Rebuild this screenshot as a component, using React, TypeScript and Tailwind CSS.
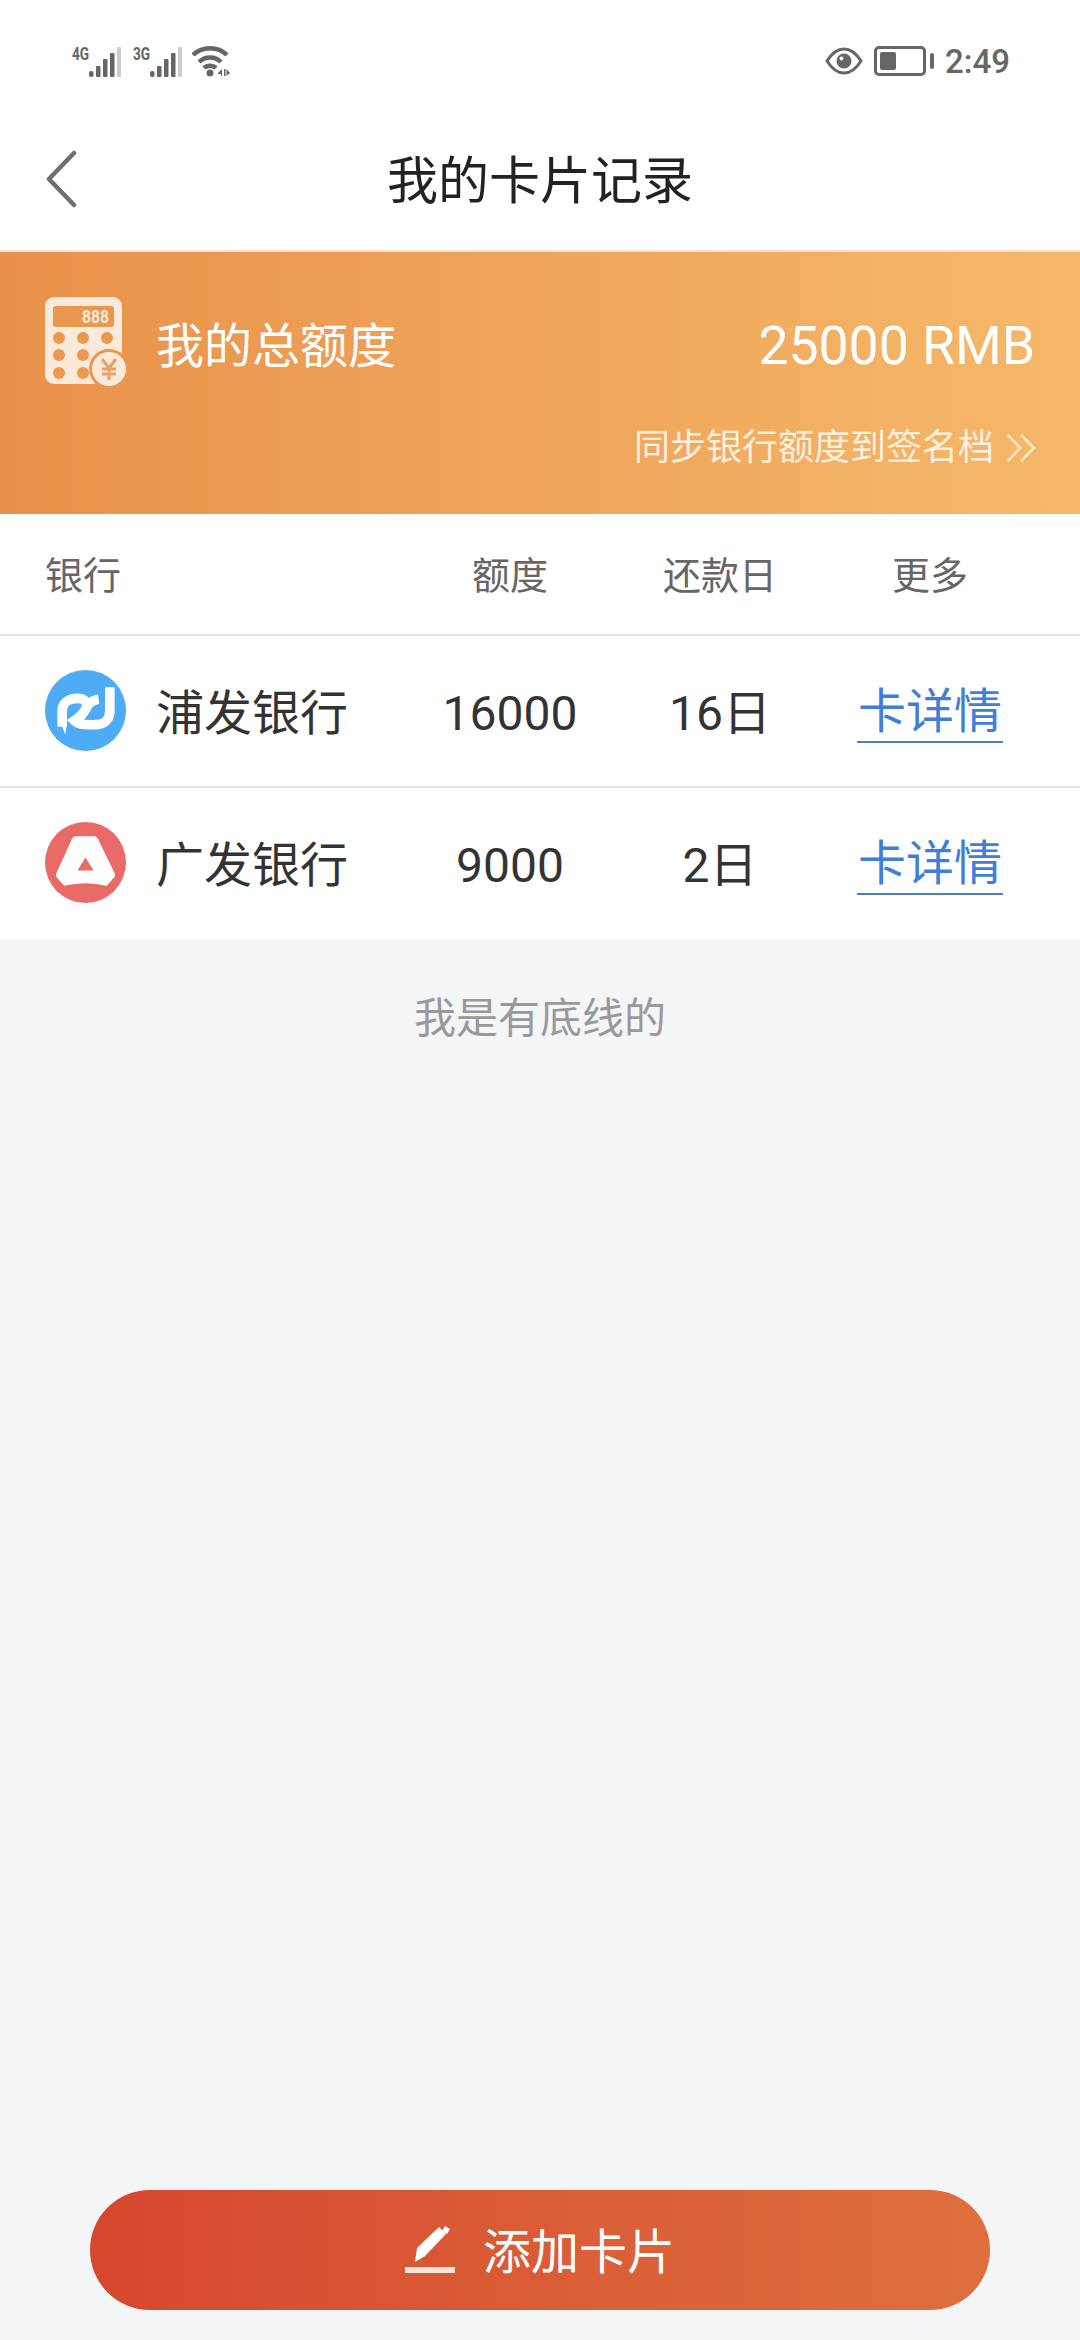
const fontStack = "font-['Roboto','Noto_Sans_CJK_SC',sans-serif]";

const cards = [
  { name: "浦发银行", limit: "16000", due: "16日", logo: "spdb" },
  { name: "广发银行", limit: "9000", due: "2日", logo: "cgb" },
];

const SignalBars = ({ label }: { label: string }) => (
  <div className="w-[49px] h-[31px] relative">
    <span className="absolute left-0 top-[-2px] text-[19px] leading-[20px] font-bold text-[#666] scale-x-[0.72] origin-left">
      {label}
    </span>
    <svg width="49" height="31" viewBox="0 0 49 31" className="absolute left-0 top-0">
      <rect x="17" y="25" width="4.5" height="6" rx="2" fill="#666" />
      <rect x="24" y="20" width="4.5" height="11" rx="1" fill="#666" />
      <rect x="31" y="13" width="4.5" height="18" rx="1" fill="#666" />
      <rect x="38" y="7" width="4.5" height="24" rx="1" fill="#666" />
      <rect x="45" y="1" width="4" height="30" rx="1" fill="#ccc" />
    </svg>
  </div>
);

const WifiIcon = () => (
  <svg width="38" height="32" viewBox="0 0 38 32" fill="none" stroke="#666" strokeWidth="4.5">
    <path d="M1 10C10 1 26 1 35 10" />
    <path d="M7 17C13 11 23 11 29 17" />
    <path d="M12 23C15 20 21 20 24 23" />
    <circle cx="18" cy="28" r="3.5" fill="#666" stroke="none" />
    <path d="M26 28l4-4v7h-1v-2h-3zM32 24h1.5v7H32zM34.5 24l3.5 4-3.5 3z" fill="#666" stroke="none" />
  </svg>
);

const EyeIcon = () => (
  <svg width="38" height="28" viewBox="0 0 38 28" fill="none">
    <path d="M2 14C7 6 12 2 19 2s12 4 17 12c-5 8-10 12-17 12S7 22 2 14Z" stroke="#666" strokeWidth="3" />
    <circle cx="19" cy="14" r="7.5" fill="#666" />
    <circle cx="16.5" cy="11.5" r="2" fill="#fff" />
  </svg>
);

const BatteryIcon = () => (
  <div className="flex items-center gap-[4px]">
    <div className="w-[52px] h-[30px] rounded-[5px] border-[3px] border-[#666] p-[3px] flex">
      <div className="w-[16px] rounded-[2px] bg-[#666]" />
    </div>
    <div className="w-[4px] h-[16px] rounded-full bg-[#666]" />
  </div>
);

const CalculatorIcon = () => (
  <svg width="84" height="92" viewBox="0 0 84 92">
    <rect x="0" y="0" width="77" height="87" rx="9" fill="#fbe9da" />
    <rect x="8" y="9" width="61" height="21" rx="3" fill="#ea974f" />
    <text x="37" y="26" fontSize="18" fontWeight="700" fill="#fbe9da" fontFamily="Roboto, sans-serif" textLength="27" lengthAdjust="spacingAndGlyphs">888</text>
    {[14, 38, 62].map((cx) =>
      [41, 58, 76].map((cy) =>
        cx === 62 && cy === 76 ? null : <circle key={`${cx}-${cy}`} cx={cx} cy={cy} r="6" fill="#ea974f" />
      )
    )}
    <circle cx="64" cy="72" r="20" fill="#ea974f" />
    <circle cx="64" cy="72" r="17" fill="#fbe9da" />
    <path d="M57 62l7 9 7-9M57 72h14M57 77h14M64 71v12" fill="none" stroke="#e9a064" strokeWidth="3" />
  </svg>
);

const SpdbLogo = () => (
  <svg width="81" height="81" viewBox="0 0 80 80" className="shrink-0">
    <circle cx="40" cy="40" r="40" fill="#4eabf5" />
    <path d="M17 56V40C17 32 24 28 32 28C40 28 43 33 40 39" fill="none" stroke="#fff" strokeWidth="9.5" />
    <path d="M53 29C46 30 42 34 40 39C37 45 33 47 29 50C34 55 42 54 50 54C58 54 64 49 64 41V17" fill="none" stroke="#fff" strokeWidth="9.5" />
    <path d="M12.5 44L20 64L22 50Z" fill="#fff" />
  </svg>
);

const CgbLogo = () => (
  <svg width="81" height="81" viewBox="0 0 80 80" className="shrink-0">
    <circle cx="40" cy="40" r="40" fill="#ea6a68" />
    <path d="M30 14H49Q51 14 52 16L69 51Q70 53 68 55L61 63Q40 58 19 63L12 55Q10 53 11 51L27 16Q28 14 30 14Z" fill="#fff" />
    <path d="M40 35L48 48H32Z" fill="#ea6a68" />
  </svg>
);

const PencilIcon = () => (
  <svg width="50" height="48" viewBox="0 0 50 48">
    <path d="M10 36L12 22L34 1L41 8L20 30Z" fill="#fff" />
    <path d="M40 0L45 3L42 8L37 5Z" fill="#fff" />
    <rect x="0" y="41" width="50" height="6" fill="#ffe3d8" />
  </svg>
);

export default function App() {
  return (
    <div className={`${fontStack} w-[1080px] min-h-[2340px] flex flex-col bg-[#f4f5f7]`}>
      {/* status bar */}
      <div className="h-[110px] bg-white flex justify-between items-start pt-[45px] pl-[72px] pr-[70px]">
        <div className="flex items-center gap-[12px]">
          <SignalBars label="4G" />
          <SignalBars label="3G" />
          <div className="-ml-[2px]"><WifiIcon /></div>
        </div>
        <div className="flex items-center h-[32px]">
          <EyeIcon />
          <div className="ml-[11px]"><BatteryIcon /></div>
          <span className="ml-[11px] text-[33px] font-medium text-[#666] leading-none">2:49</span>
        </div>
      </div>

      {/* nav bar */}
      <div className="h-[142px] bg-white border-b-2 border-[#f5e3d0] relative flex items-center justify-center">
        <svg width="34" height="58" viewBox="0 0 34 58" fill="none" className="absolute left-[45px] top-[40px]">
          <path d="M29 3L4 29L29 55" stroke="#6f6f6f" strokeWidth="4.5" strokeLinecap="round" strokeLinejoin="round" />
        </svg>
        <h1 className="text-[51px] font-normal text-[#222] leading-none pt-[2px]">我的卡片记录</h1>
      </div>

      {/* total limit banner */}
      <div className="h-[262px] bg-gradient-to-r from-[#e9914a] to-[#f5b969] px-[45px] pt-[45px] flex flex-col text-white">
        <div className="flex items-start">
          <CalculatorIcon />
          <span className="ml-[27px] mt-[22px] text-[48px] leading-[56px]">我的总额度</span>
          <span className="ml-auto mt-[19px] text-[53.5px] leading-[60px]">25000 RMB</span>
        </div>
        <div className="mt-[34px] flex items-center justify-end gap-[12px] text-[#fdf0e0]">
          <span className="text-[36px] leading-[50px]">同步银行额度到签名档</span>
          <svg width="30" height="30" viewBox="0 0 30 30" fill="none" stroke="#fbe6cc" strokeWidth="2.5" className="-mr-[1px]">
            <path d="M2 2L14 15L2 28M15 2L28 15L15 28" />
          </svg>
        </div>
      </div>

      {/* table */}
      <div className="bg-white">
        <div className="h-[122px] border-b-2 border-[#e3e3e3] grid grid-cols-[360px_210px_210px_210px] px-[45px] items-center text-[38px] text-[#666] pt-[5px]">
          <span>银行</span>
          <span className="text-center">额度</span>
          <span className="text-center">还款日</span>
          <span className="text-center">更多</span>
        </div>
        {cards.map((card, i) => (
          <div
            key={card.name}
            className={`grid grid-cols-[360px_210px_210px_210px] px-[45px] items-center text-[48px] text-[#333] ${
              i === 0 ? "h-[152px] border-b-2 border-[#e3e3e3]" : "h-[151px]"
            }`}
          >
            <div className="flex items-center gap-[30px]">
              <div className="-mt-[2px] shrink-0">
                {card.logo === "spdb" ? <SpdbLogo /> : <CgbLogo />}
              </div>
              <span className="leading-none pt-[5px]">{card.name}</span>
            </div>
            <span className="text-center leading-none pt-[5px]">{card.limit}</span>
            <span className="text-center leading-none pt-[5px]">{card.due}</span>
            <div className="text-center leading-none pt-[5px]">
              <a className="inline-block text-[#3f7fd9] border-b-2 border-[#4a80c4] px-[1px] pb-[2px] leading-[54px]">卡详情</a>
            </div>
          </div>
        ))}
      </div>

      <p className="text-center text-[42px] text-[#999] leading-none mt-[59px]">我是有底线的</p>

      {/* add card button */}
      <div className="mt-auto mb-[30px] px-[90px]">
        <button className="w-full h-[120px] rounded-full bg-gradient-to-r from-[#d6472e] to-[#de6f3f] flex items-center justify-center gap-[28px] text-white text-[48px]">
          <PencilIcon />
          <span className="leading-none pt-[5px]">添加卡片</span>
        </button>
      </div>
    </div>
  );
}
